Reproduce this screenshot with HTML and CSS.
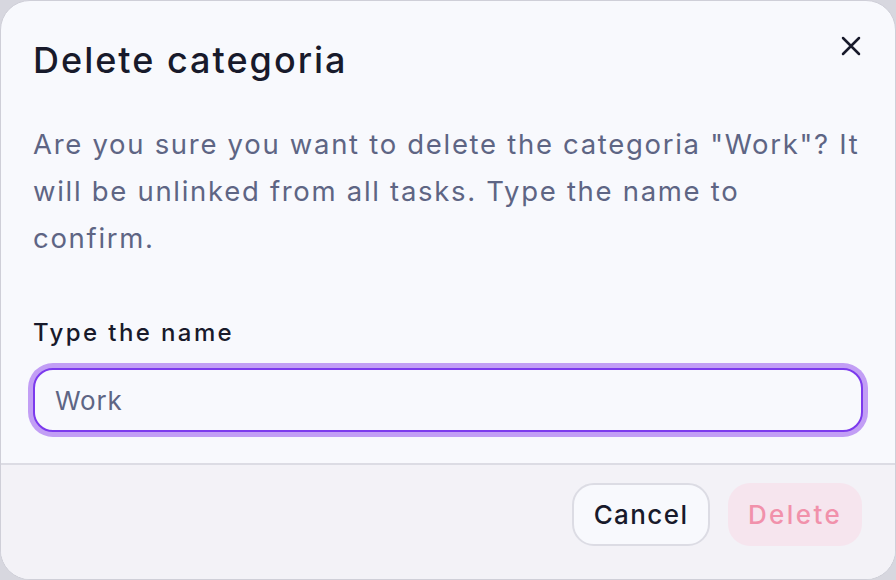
FILE: index.html
```html
<!DOCTYPE html>
<html lang="en">
<head>
<meta charset="utf-8">
<title>Delete categoria</title>
<link rel="stylesheet" href="styles.css">
</head>
<body>
<div class="dialog" role="dialog" aria-labelledby="dlg-title">
  <div class="dialog-body">
    <div class="dialog-header">
      <h2 id="dlg-title" class="dialog-title">Delete categoria</h2>
      <button class="close-btn" aria-label="Close">
        <svg width="22" height="22" viewBox="0 0 22 22" fill="none" stroke="currentColor" stroke-width="2.5" stroke-linecap="round">
          <path d="M3 3L19 19M19 3L3 19"/>
        </svg>
      </button>
    </div>
    <p class="dialog-text">Are you sure you want to delete the categoria "Work"? It will be unlinked from all tasks. Type the name to confirm.</p>
    <label class="field-label" for="name-input">Type the name</label>
    <div class="input-wrap">
      <input id="name-input" class="text-input" type="text" value="Work">
    </div>
  </div>
  <div class="dialog-footer">
    <button class="btn btn-cancel">Cancel</button>
    <button class="btn btn-delete" disabled>Delete</button>
  </div>
</div>
</body>
</html>
```
FILE: styles.css
```css
* { box-sizing: border-box; }
html, body {
  margin: 0;
  padding: 0;
  height: 100%;
}
body {
  background: #d7d7df;
  font-family: Inter, "Noto Sans", sans-serif;
  overflow: hidden;
}
.dialog {
  width: 896px;
  height: 580px;
  background: #f8f9fd;
  border: 1px solid #cfcfd8;
  border-radius: 30px;
  overflow: hidden;
  display: flex;
  flex-direction: column;
}
.dialog-body {
  padding: 37px 32px 31px;
  border-bottom: 2px solid #dcdce4;
}
.dialog-header {
  display: flex;
  justify-content: space-between;
  align-items: flex-start;
}
.dialog-title {
  margin: 0;
  font-size: 36px;
  line-height: 44px;
  font-weight: 500;
  color: #181a2b;
  letter-spacing: 2px;
}
.close-btn {
  background: none;
  border: 0;
  padding: 0;
  margin: -3px 1px 0 0;
  color: #181a2b;
  display: flex;
}
.dialog-text {
  margin: 39px 0 0;
  font-size: 27.5px;
  line-height: 47px;
  color: #5e6584;
  letter-spacing: 1.7px;
}
.field-label {
  display: block;
  margin-top: 55px;
  font-size: 24px;
  line-height: 32px;
  font-weight: 500;
  color: #181a2b;
  letter-spacing: 2.4px;
}
.input-wrap {
  margin-top: 19px;
}
.text-input {
  display: block;
  width: 100%;
  height: 64px;
  border: 2px solid #7c3aed;
  border-radius: 20px;
  box-shadow: 0 0 0 5px #c29ef5;
  background: #f8f9fd;
  padding: 0 20px;
  font-family: inherit;
  font-size: 26px;
  color: #5e6584;
  outline: none;
  letter-spacing: 0.8px;
}
.dialog-footer {
  flex: 1;
  background: #f3f2f7;
  display: flex;
  justify-content: flex-end;
  align-items: flex-start;
  gap: 18px;
  padding: 18px 33px 0;
}
.btn {
  height: 63px;
  border-radius: 22px;
  font-family: inherit;
  font-size: 26px;
  font-weight: 500;
  letter-spacing: 1.4px;
  padding: 0;
}
.btn-cancel {
  width: 138px;
  background: #f8f9fd;
  border: 2px solid #dcdce4;
  color: #181a2b;
}
.btn-delete {
  width: 134px;
  background: #f6e5ee;
  border: 0;
  color: #f191ab;
  letter-spacing: 2.4px;
}
```
